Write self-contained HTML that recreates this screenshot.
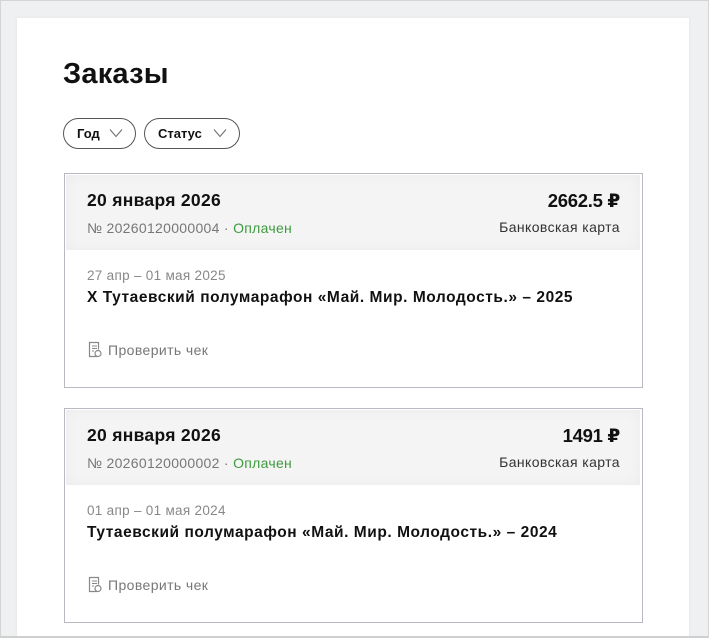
<!DOCTYPE html>
<html style="width:709px;height:638px;overflow:hidden"><head><meta charset="utf-8"><style>
*{margin:0;padding:0;box-sizing:border-box}
body{width:709px;height:638px;background:#eff0f1;font-family:"Liberation Sans","DejaVu Sans",sans-serif;position:relative;overflow:hidden}
.frame{position:absolute;left:0;top:0;width:709px;height:638px;border:1px solid #d4d4d4;border-bottom:2px solid #cfcfcf;pointer-events:none}
.panel{position:absolute;left:17px;top:18px;width:672px;height:630px;background:#fff;box-shadow:0 0 3px rgba(0,0,0,.06)}
.a{position:absolute;white-space:nowrap}
h1{position:absolute;left:63px;top:58px;font-size:29px;font-weight:bold;color:#111;letter-spacing:0.2px}
.pill{position:absolute;top:118px;height:31px;border:1px solid #555;border-radius:16px;font-size:13px;font-weight:bold;color:#111;line-height:29px;padding-left:13px}
.pill svg{position:absolute;top:9px}
.card{position:absolute;left:64px;width:579px;height:215px;border:1px solid #b9b9c2;background:#fff}
.hd{position:absolute;left:1px;top:1px;right:2px;height:75px;background:#f4f4f4;box-shadow:inset 0 0 14px rgba(0,0,0,.04)}
.date{font-size:17.5px;font-weight:bold;color:#111;letter-spacing:0.3px}
.num{font-size:14px;color:#777;letter-spacing:0.3px}
.num b{font-weight:normal;color:#3e9a3e}
.sum{font-size:18.5px;font-weight:bold;color:#111;right:22px;letter-spacing:-0.3px}
.pay{font-size:14px;color:#333;right:22px;letter-spacing:0.4px}
.rng{font-size:13.5px;color:#888;letter-spacing:0.3px}
.tt{font-size:15.5px;font-weight:bold;color:#111;letter-spacing:0.55px}
.chk{font-size:14px;color:#777;letter-spacing:0.4px}
</style></head><body>
<div class="panel"></div>
<h1>Заказы</h1>
<div class="pill" style="left:63px;width:73px">Год<svg style="left:45px" width="14" height="10" viewBox="0 0 14 10"><path d="M1 1.5L7 8.5L13 1.5" fill="none" stroke="#777" stroke-width="1.2"/></svg></div>
<div class="pill" style="left:144px;width:96px">Статус<svg style="left:68px" width="14" height="10" viewBox="0 0 14 10"><path d="M1 1.5L7 8.5L13 1.5" fill="none" stroke="#777" stroke-width="1.2"/></svg></div>

<div class="card" style="top:173px">
<div class="hd"></div>
<div class="a date" style="left:22px;top:16px">20 января 2026</div>
<div class="a num" style="left:22px;top:46px">№ 20260120000004 · <b>Оплачен</b></div>
<div class="a sum" style="top:16px">2662.5 ₽</div>
<div class="a pay" style="top:45px">Банковская карта</div>
<div class="a rng" style="left:22px;top:94px">27 апр – 01 мая 2025</div>
<div class="a tt" style="left:22px;top:115px">X Тутаевский полумарафон «Май. Мир. Молодость.» – 2025</div>
<svg class="a" style="left:23px;top:167px" width="14" height="17" viewBox="0 0 14 17"><path d="M9 15.5H1.5V1.5h9v7" fill="none" stroke="#888" stroke-width="1.2"/><path d="M4 5h5M4 7.5h5M4 10h2" stroke="#888" stroke-width="1.1"/><circle cx="10" cy="12.5" r="3" fill="none" stroke="#888" stroke-width="1.2"/></svg>
<div class="a chk" style="left:43px;top:168px">Проверить чек</div>
</div>

<div class="card" style="top:408px">
<div class="hd"></div>
<div class="a date" style="left:22px;top:16px">20 января 2026</div>
<div class="a num" style="left:22px;top:46px">№ 20260120000002 · <b>Оплачен</b></div>
<div class="a sum" style="top:16px">1491 ₽</div>
<div class="a pay" style="top:45px">Банковская карта</div>
<div class="a rng" style="left:22px;top:94px">01 апр – 01 мая 2024</div>
<div class="a tt" style="left:22px;top:115px">Тутаевский полумарафон «Май. Мир. Молодость.» – 2024</div>
<svg class="a" style="left:23px;top:167px" width="14" height="17" viewBox="0 0 14 17"><path d="M9 15.5H1.5V1.5h9v7" fill="none" stroke="#888" stroke-width="1.2"/><path d="M4 5h5M4 7.5h5M4 10h2" stroke="#888" stroke-width="1.1"/><circle cx="10" cy="12.5" r="3" fill="none" stroke="#888" stroke-width="1.2"/></svg>
<div class="a chk" style="left:43px;top:168px">Проверить чек</div>
</div>
<div class="frame"></div>
</body></html>
